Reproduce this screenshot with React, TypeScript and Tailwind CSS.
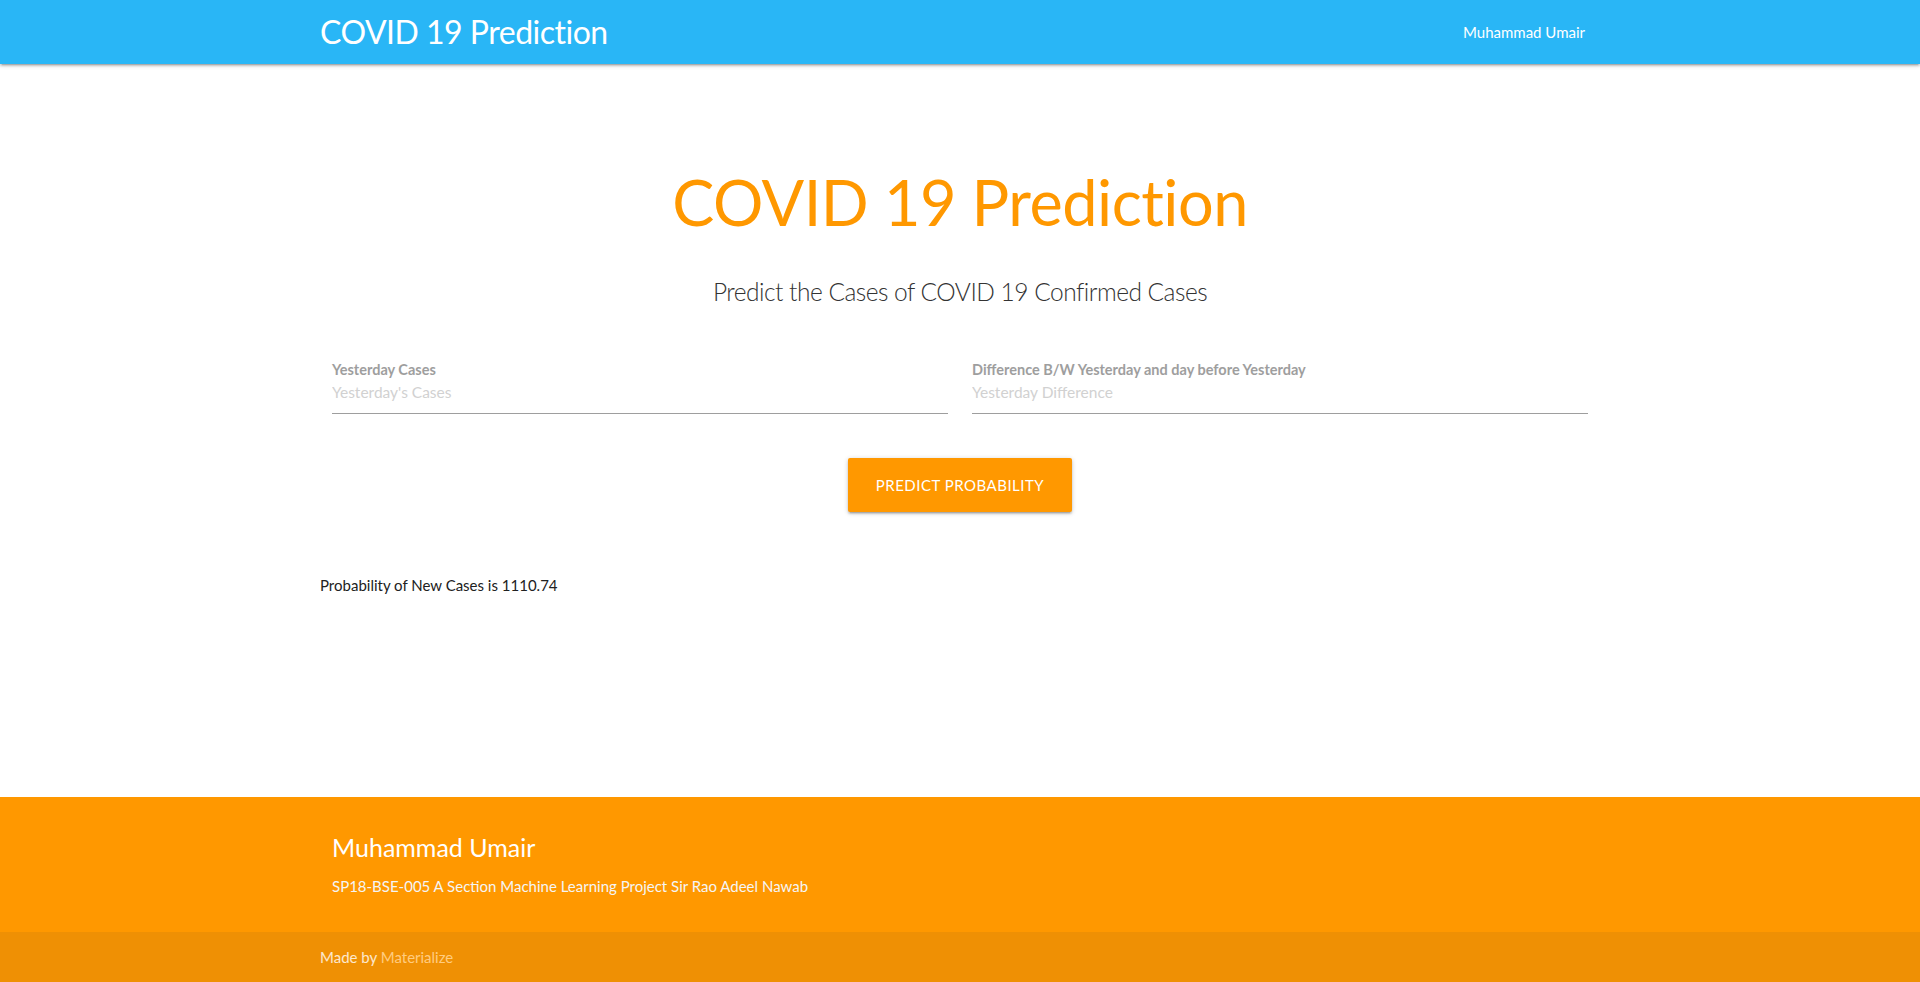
import React from "react";

const font = { fontFamily: "Lato, 'Liberation Sans', sans-serif" };

function Field({ label, placeholder }: { label: string; placeholder: string }) {
  return (
    <div className="w-1/2 px-3">
      <label className="block text-[14.5px] leading-4 font-bold text-[#9e9e9e]">{label}</label>
      <div className="mt-[3px] border-b border-[#9e9e9e] pb-[10px]">
        <input
          className="block h-[22px] w-full bg-transparent text-[15.5px] leading-[22px] text-[#212121] outline-none placeholder:text-[#d1d1d1]"
          placeholder={placeholder}
        />
      </div>
    </div>
  );
}

export default function App() {
  return (
    <div className="min-h-[982px] flex flex-col bg-white" style={font}>
      <nav className="h-16 bg-[#29b6f6] shadow-[0_2px_2px_0_rgba(0,0,0,0.14),0_3px_1px_-2px_rgba(0,0,0,0.12),0_1px_5px_0_rgba(0,0,0,0.2)]">
        <div className="mx-auto flex h-16 max-w-[1280px] items-center justify-between">
          <a className="text-[32px] leading-[64px] tracking-[-0.5px] text-white">COVID 19 Prediction</a>
          <a className="px-[15px] text-[15px] leading-[64px] text-white">Muhammad Umair</a>
        </div>
      </nav>

      <main className="mx-auto w-full max-w-[1280px] flex-1">
        <h1 className="mt-[101px] text-center text-[63px] leading-[74px] tracking-[-0.5px] text-[#ff9800]">
          COVID 19 Prediction
        </h1>
        <h5 className="mt-[38px] text-center text-[24.5px] leading-[29px] tracking-[-0.5px] font-light text-[#333]">
          Predict the Cases of COVID 19 Confirmed Cases
        </h5>

        <div className="mt-[56px] flex">
          <Field label="Yesterday Cases" placeholder="Yesterday's Cases" />
          <Field label="Difference B/W Yesterday and day before Yesterday" placeholder="Yesterday Difference" />
        </div>

        <div className="mt-[44px] flex justify-center">
          <button className="h-[54px] rounded-[2px] bg-[#ff9800] px-7 text-[15px] tracking-[0.5px] text-white uppercase shadow-[0_2px_2px_0_rgba(0,0,0,0.14),0_3px_1px_-2px_rgba(0,0,0,0.12),0_1px_5px_0_rgba(0,0,0,0.2)]">
            Predict Probability
          </button>
        </div>

        <p className="mt-[61px] text-[15px] leading-6 text-[#212121]">Probability of New Cases is 1110.74</p>
      </main>

      <footer className="bg-[#ff9800]">
        <div className="mx-auto max-w-[1280px] px-3 pt-[36px] pb-[34px]">
          <h5 className="text-[25px] leading-[29px] text-white">Muhammad Umair</h5>
          <p className="mt-3 text-[15px] leading-6 text-[#f5f5f5]">
            SP18-BSE-005 A Section Machine Learning Project Sir Rao Adeel Nawab
          </p>
        </div>
        <div className="h-[50px] bg-[#ef9004]">
          <div className="mx-auto flex h-[50px] max-w-[1280px] items-center text-[15px] text-white/80">
            Made by&nbsp;<a className="text-[#ffcc80]">Materialize</a>
          </div>
        </div>
      </footer>
    </div>
  );
}
